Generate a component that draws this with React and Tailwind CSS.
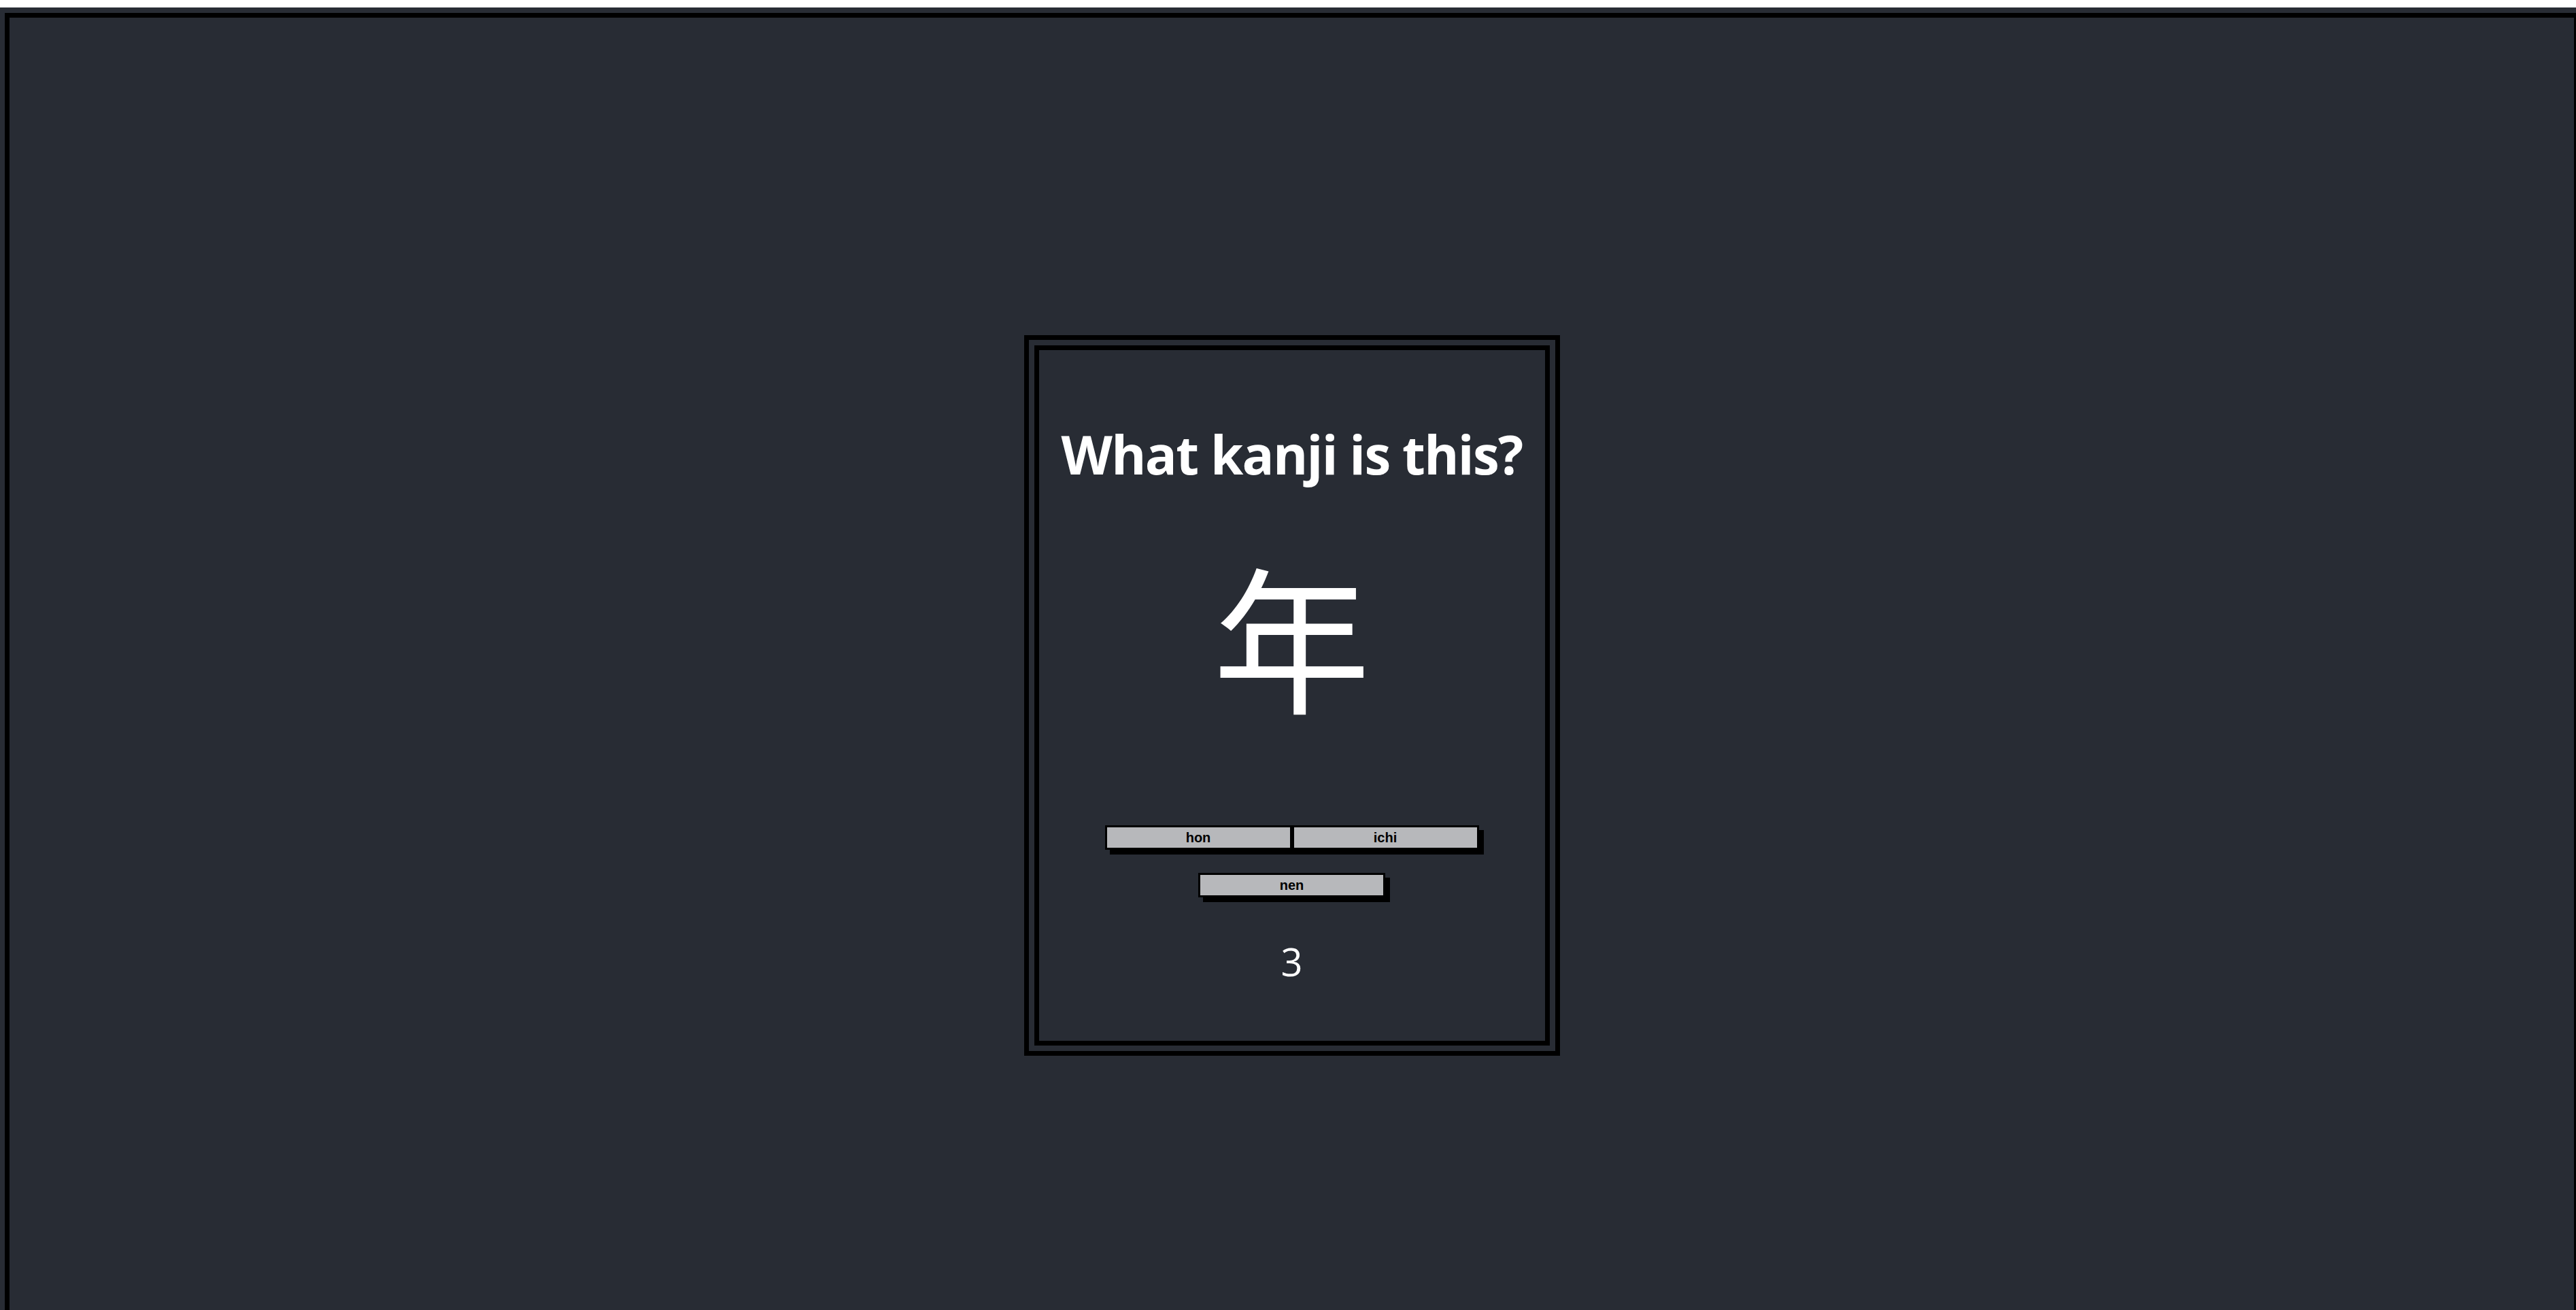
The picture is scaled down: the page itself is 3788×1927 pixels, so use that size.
import React from 'react';

const options = ['hon', 'ichi'];

const AnswerButton = ({ label }) => (
  <button className="w-[275px] h-[36px] border-[3px] border-black bg-[#b7b8bb] shadow-[7px_7px_0_#000] text-[20px] font-bold text-black leading-none font-['Liberation_Sans',Arial,sans-serif]">
    {label}
  </button>
);

const App = () => {
  return (
    <div className="h-screen overflow-hidden bg-white pt-[11px]">
      <div className="h-full bg-[#282c34] pt-2 pl-[7px]">
        {/* Outer frame */}
        <div className="h-[2000px] border-[7px] border-r-[3px] border-black flex justify-center pt-[467px]">
          {/* Quiz card */}
          <div className="w-[788px] h-[1060px] border-[7px] border-black p-2">
            <div className="h-full border-[7px] border-black flex flex-col items-center text-white">
              <h1 className="mt-[114px] text-[78px] leading-none tracking-[-1.7px] font-bold font-['Open_Sans','Noto_Sans',sans-serif] whitespace-nowrap">
                What kanji is this?
              </h1>
              <div className="mt-[108px] text-[232px] leading-none font-normal font-['Noto_Sans_CJK_JP',sans-serif]">
                年
              </div>
              <div className="mt-[167px] flex">
                {options.map((o) => (
                  <AnswerButton key={o} label={o} />
                ))}
              </div>
              <div className="mt-[34px]">
                <AnswerButton label="nen" />
              </div>
              <div className="mt-[66px] text-[56px] leading-none font-normal font-['Open_Sans','Noto_Sans',sans-serif]">
                3
              </div>
            </div>
          </div>
        </div>
      </div>
    </div>
  );
};

export default App;
